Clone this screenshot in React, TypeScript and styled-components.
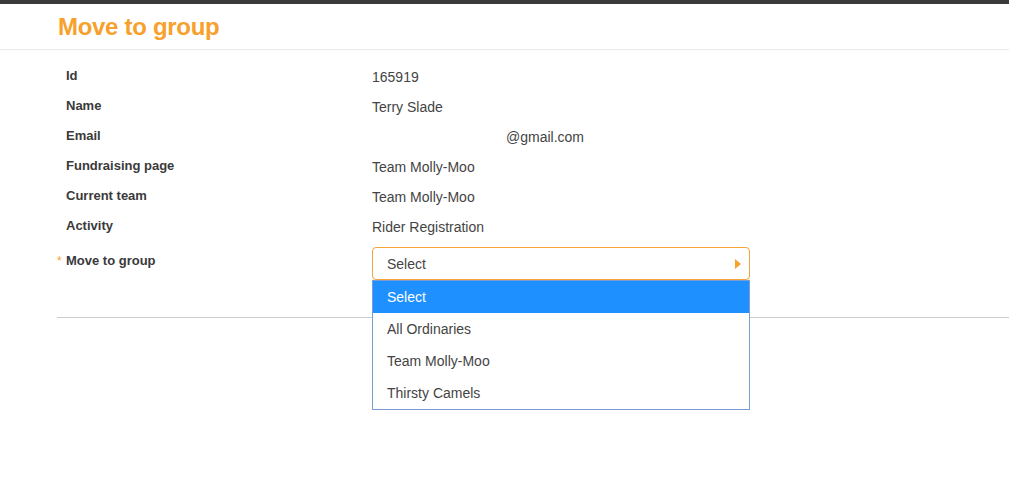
import styled, { createGlobalStyle } from "styled-components";

const GlobalStyle = createGlobalStyle`
  html, body {
    margin: 0;
    padding: 0;
    background: #fff;
    font-family: "Liberation Sans", Arial, sans-serif;
  }
`;

const Page = styled.div`
  min-height: 100vh;
`;

const TopBar = styled.div`
  height: 4px;
  background: #3a3a3a;
`;

const Header = styled.header`
  height: 45px;
  border-bottom: 1px solid #ebebeb;
  display: flex;
  align-items: center;
  padding-left: 58px;
`;

const Title = styled.h1`
  margin: 0;
  font-size: 24px;
  font-weight: 700;
  color: #f7a12c;
  letter-spacing: -0.3px;
`;

const Form = styled.section`
  margin-left: 57px;
  padding-top: 12px;
  padding-bottom: 37px;
  border-bottom: 1px solid #cccccc;
`;

const Row = styled.div<{ $gap?: number; $tall?: boolean }>`
  display: grid;
  grid-template-columns: 315px 378px;
  height: ${(p) => (p.$tall ? 33 : 30)}px;
  margin-top: ${(p) => p.$gap ?? 0}px;
  position: relative;
`;

const Label = styled.div`
  padding-left: 9px;
  padding-top: 4px;
  line-height: 20px;
  font-size: 13px;
  font-weight: 700;
  color: #3a3a3a;
`;

const Required = styled.span`
  display: inline-block;
  width: 9px;
  margin-left: -9px;
  color: #f7a12c;
  font-weight: 400;
  font-size: 12px;
`;

const Value = styled.div<{ $indent?: number }>`
  padding-top: 5px;
  padding-left: ${(p) => p.$indent ?? 0}px;
  line-height: 20px;
  font-size: 14px;
  color: #444;
`;

const SelectWrap = styled.div`
  position: relative;
`;

const SelectBox = styled.div`
  box-sizing: border-box;
  height: 33px;
  border: 1px solid #f5a33b;
  border-radius: 4px;
  display: flex;
  align-items: center;
  justify-content: space-between;
  padding: 0 8px 0 14px;
  font-size: 14px;
  color: #444;
`;

const Caret = styled.span`
  width: 0;
  height: 0;
  border-top: 5.5px solid transparent;
  border-bottom: 5.5px solid transparent;
  border-left: 6px solid #f7a12c;
`;

const Menu = styled.ul`
  position: absolute;
  top: 33px;
  left: 0;
  width: 378px;
  box-sizing: border-box;
  margin: 0;
  padding: 0;
  list-style: none;
  border: 1px solid #7a9cd3;
  background: #fff;
  z-index: 5;
`;

const Option = styled.li<{ $active?: boolean }>`
  height: 32px;
  display: flex;
  align-items: center;
  padding-left: 14px;
  font-size: 14px;
  color: ${(p) => (p.$active ? "#fff" : "#444")};
  background: ${(p) => (p.$active ? "#1e90ff" : "#fff")};
`;

const details = [
  { label: "Id", value: "165919" },
  { label: "Name", value: "Terry Slade" },
  { label: "Email", value: "@gmail.com", indent: 134 },
  { label: "Fundraising page", value: "Team Molly-Moo" },
  { label: "Current team", value: "Team Molly-Moo" },
  { label: "Activity", value: "Rider Registration" },
];

const groups = ["Select", "All Ordinaries", "Team Molly-Moo", "Thirsty Camels"];

export default function App() {
  return (
    <Page>
      <GlobalStyle />
      <TopBar />
      <Header>
        <Title>Move to group</Title>
      </Header>
      <Form>
        {details.map((d) => (
          <Row key={d.label}>
            <Label>{d.label}</Label>
            <Value $indent={d.indent}>{d.value}</Value>
          </Row>
        ))}
        <Row $gap={5} $tall>
          <Label>
            <Required>*</Required>Move to group
          </Label>
          <SelectWrap>
            <SelectBox>
              Select
              <Caret />
            </SelectBox>
            <Menu>
              {groups.map((g, i) => (
                <Option key={g} $active={i === 0}>
                  {g}
                </Option>
              ))}
            </Menu>
          </SelectWrap>
        </Row>
      </Form>
    </Page>
  );
}
